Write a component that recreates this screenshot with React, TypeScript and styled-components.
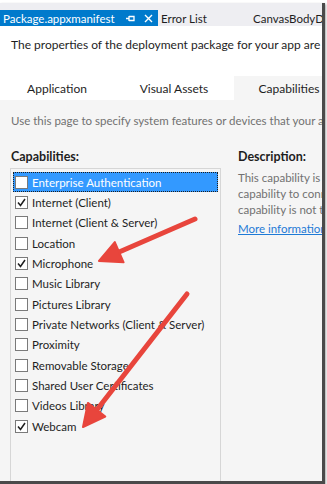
import React from 'react';
import styled, { createGlobalStyle } from 'styled-components';

const GlobalStyle = createGlobalStyle`
  html, body {
    margin: 0;
    padding: 0;
    background: #ffffff;
  }
  body {
    font-family: Lato, "Noto Sans", sans-serif;
  }
`;

const Frame = styled.div`
  position: relative;
  width: 322px;
  height: 478px;
  margin-top: 3px;
  overflow: hidden;
  background: #f5f5f5;
  border-right: 3px solid #4a4a4a;
  border-bottom: 3px solid #4a4a4a;
  box-shadow: 1px 1px 2px rgba(0, 0, 0, 0.35);
  display: flex;
  flex-direction: column;
`;

const TopStrip = styled.div`
  height: 7px;
  background: #eeeef2;
`;

const DocTabs = styled.div`
  height: 16px;
  display: flex;
  align-items: stretch;
  background: #eeeef2;
  font-size: 11.5px;
  color: #1e1e1e;
  white-space: nowrap;
`;

const DocTab = styled.div<{ $active?: boolean; $width: number }>`
  width: ${p => p.$width}px;
  flex: none;
  display: flex;
  align-items: center;
  padding-left: 3px;
  box-sizing: border-box;
  background: ${p => (p.$active ? '#007acc' : 'transparent')};
  color: ${p => (p.$active ? '#ffffff' : '#1e1e1e')};
  overflow: hidden;
`;

const TabIcons = styled.span`
  display: flex;
  align-items: center;
  gap: 9px;
  margin-left: auto;
  margin-right: 5px;
`;

const Intro = styled.div`
  height: 50px;
  background: #ffffff;
  padding: 11px 0 0 11px;
  box-sizing: border-box;
  font-size: 12px;
  color: #1e1e1e;
  white-space: nowrap;
`;

const PageTabs = styled.div`
  height: 24px;
  display: flex;
  background: #ffffff;
  font-size: 12px;
  color: #1e1e1e;
  white-space: nowrap;
`;

const PageTab = styled.div<{ $active?: boolean; $width: number }>`
  width: ${p => p.$width}px;
  flex: none;
  display: flex;
  align-items: center;
  justify-content: center;
  background: ${p => (p.$active ? '#f5f5f5' : '#ffffff')};
`;

const Body = styled.div`
  flex: 1;
  padding: 14px 0 0 11px;
  display: flex;
  flex-direction: column;
`;

const Hint = styled.div`
  font-size: 11.5px;
  color: #717171;
  white-space: nowrap;
  height: 30px;
`;

const Columns = styled.div`
  flex: 1;
  display: grid;
  grid-template-columns: 227px 1fr;
`;

const LeftCol = styled.div`
  display: flex;
  flex-direction: column;
`;

const Heading = styled.div`
  font-weight: 700;
  font-size: 12.5px;
  color: #1e1e1e;
  height: 24px;
  display: flex;
  align-items: center;
`;

const ListBox = styled.div`
  flex: 1;
  margin-left: -1px;
  width: 211px;
  border: 1px solid #d6d6d6;
  border-bottom: none;
  background: #f5f5f5;
  padding: 3px 2px 0;
  box-sizing: border-box;
`;

const Item = styled.div<{ $selected?: boolean }>`
  height: 20.33px;
  display: flex;
  align-items: center;
  gap: 4px;
  padding-left: 2px;
  font-size: 11.5px;
  color: ${p => (p.$selected ? '#ffffff' : '#1e1e1e')};
  background: ${p => (p.$selected ? '#3399ff' : 'transparent')};
  outline: ${p => (p.$selected ? '1px dotted #1e1e1e' : 'none')};
  outline-offset: -1px;
  white-space: nowrap;
`;

const Box = styled.span`
  width: 11px;
  height: 11px;
  flex: none;
  border: 1px solid #7a7a7a;
  background: #ffffff;
  display: flex;
  align-items: center;
  justify-content: center;
`;

const RightCol = styled.div`
  display: flex;
  flex-direction: column;
  white-space: nowrap;
`;

const DescBlock = styled.div`
  margin-top: 2px;
`;

const DescText = styled.div`
  font-size: 11.5px;
  color: #717171;
  line-height: 16px;
`;

const MoreLink = styled.div`
  margin-top: 4px;
  font-size: 11.5px;
  color: #1e7ad6;
  text-decoration: underline;
`;

const Arrows = styled.svg`
  position: absolute;
  left: 0;
  top: -3px;
  pointer-events: none;
`;

const capabilities: { label: string; checked?: boolean }[] = [
  { label: 'Enterprise Authentication' },
  { label: 'Internet (Client)', checked: true },
  { label: 'Internet (Client & Server)' },
  { label: 'Location' },
  { label: 'Microphone', checked: true },
  { label: 'Music Library' },
  { label: 'Pictures Library' },
  { label: 'Private Networks (Client & Server)' },
  { label: 'Proximity' },
  { label: 'Removable Storage' },
  { label: 'Shared User Certificates' },
  { label: 'Videos Library' },
  { label: 'Webcam', checked: true },
];

const Check = () => (
  <svg width="9" height="9" viewBox="0 0 9 9">
    <path d="M1 4.5 L3.5 7.5 L8 1" fill="none" stroke="#1e1e1e" strokeWidth="1.5" />
  </svg>
);

const App: React.FC = () => {
  return (
    <>
      <GlobalStyle />
      <Frame>
        <TopStrip />
        <DocTabs>
          <DocTab $active $width={158}>
            Package.appxmanifest
            <TabIcons>
              <svg width="9" height="7" viewBox="0 0 9 7">
                <path d="M0 3.5 H3 M3 1 V6 M3 1.5 H8 V5.5 H3" fill="none" stroke="#ffffff" strokeWidth="1.3" />
              </svg>
              <svg width="9" height="9" viewBox="0 0 9 9">
                <path d="M1 1 L8 8 M8 1 L1 8" stroke="#ffffff" strokeWidth="1.4" />
              </svg>
            </TabIcons>
          </DocTab>
          <DocTab $width={92}>Error List</DocTab>
          <DocTab $width={100}>CanvasBodyDrawing.cs</DocTab>
        </DocTabs>
        <Intro>The properties of the deployment package for your app are contained in this file.</Intro>
        <PageTabs>
          <PageTab $width={114}>Application</PageTab>
          <PageTab $width={120}>Visual Assets</PageTab>
          <PageTab $active $width={110}>Capabilities</PageTab>
        </PageTabs>
        <Body>
          <Hint>Use this page to specify system features or devices that your app can use.</Hint>
          <Columns>
            <LeftCol>
              <Heading>Capabilities:</Heading>
              <ListBox>
                {capabilities.map((c, i) => (
                  <Item key={c.label} $selected={i === 0}>
                    <Box>{c.checked && <Check />}</Box>
                    {c.label}
                  </Item>
                ))}
              </ListBox>
            </LeftCol>
            <RightCol>
              <Heading>Description:</Heading>
              <DescBlock>
                <DescText>This capability is used to access</DescText>
                <DescText>capability to connect to the network</DescText>
                <DescText>capability is not the default.</DescText>
                <MoreLink>More information</MoreLink>
              </DescBlock>
            </RightCol>
          </Columns>
        </Body>
        <Arrows width="322" height="481" viewBox="0 0 322 481">
          <g fill="#e8453c" stroke="#e8453c" strokeLinecap="round" strokeLinejoin="round">
            <line x1="195" y1="219" x2="118" y2="252.5" strokeWidth="5" />
            <polygon points="99,261 114.8,242.1 123.6,262.3" strokeWidth="2" />
            <line x1="187" y1="294" x2="97.5" y2="409" strokeWidth="5" />
            <polygon points="83,427 87.9,402.9 105.3,416.5" strokeWidth="2" />
          </g>
        </Arrows>
      </Frame>
    </>
  );
};

export default App;
